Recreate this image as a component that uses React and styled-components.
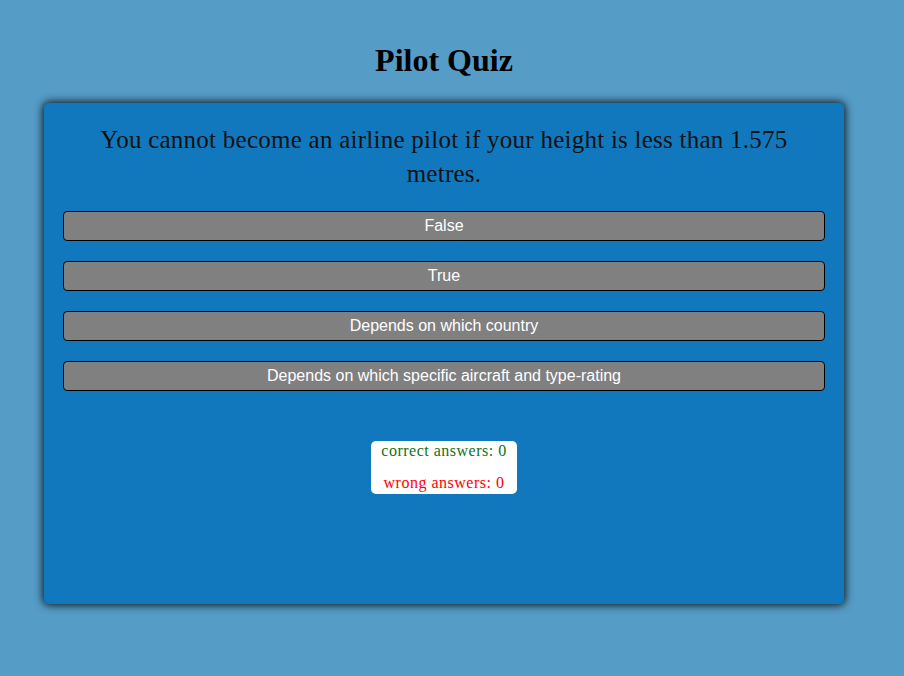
import React from "react";
import styled, { createGlobalStyle } from "styled-components";

const GlobalStyle = createGlobalStyle`
  html, body {
    margin: 0;
    padding: 0;
    background-color: #559cc7;
  }
  body {
    font-family: "Liberation Serif", "DejaVu Serif", serif;
    min-height: 676px;
  }
`;

const Page = styled.div`
  width: 888px;
  display: flex;
  flex-direction: column;
  align-items: center;
  padding-top: 40px;
`;

const Title = styled.h1`
  margin: 0 0 23px;
  font-size: 32px;
  line-height: 40px;
  font-weight: bold;
  color: #000;
`;

const Card = styled.div`
  width: 800px;
  height: 501px;
  box-sizing: border-box;
  background-color: #1278bd;
  border-radius: 5px;
  box-shadow: 0 0 8px 1px rgba(0, 0, 0, 0.9);
  padding: 20px 19px;
  display: flex;
  flex-direction: column;
  align-items: center;
`;

const Question = styled.p`
  margin: 0 0 20px;
  padding: 0 30px;
  font-size: 25px;
  line-height: 34px;
  letter-spacing: 0.25px;
  text-align: center;
  color: #111;
`;

const Answers = styled.div`
  width: 100%;
  display: flex;
  flex-direction: column;
  gap: 20px;
`;

const AnswerButton = styled.button`
  width: 100%;
  height: 30px;
  box-sizing: border-box;
  background-color: #808080;
  border: 1px solid #000;
  border-radius: 4px;
  color: #fff;
  font-family: "Liberation Sans", Arial, sans-serif;
  font-size: 16px;
  cursor: pointer;
`;

const Score = styled.div`
  margin-top: 50px;
  background-color: #fff;
  border-radius: 5px;
  padding: 0 10px 1px;
  display: flex;
  flex-direction: column;
  align-items: center;
  gap: 12px;
`;

const ScoreLine = styled.span`
  font-size: 16px;
  line-height: 20px;
  letter-spacing: 0.5px;
  color: ${({ $wrong }) => ($wrong ? "#ff0000" : "#14701a")};
`;

const answers = [
  "False",
  "True",
  "Depends on which country",
  "Depends on which specific aircraft and type-rating",
];

export default function App() {
  return (
    <>
      <GlobalStyle />
      <Page>
        <Title>Pilot Quiz</Title>
        <Card>
          <Question>
            You cannot become an airline pilot if your height is less than 1.575 metres.
          </Question>
          <Answers>
            {answers.map((a) => (
              <AnswerButton key={a}>{a}</AnswerButton>
            ))}
          </Answers>
          <Score>
            <ScoreLine>correct answers: 0</ScoreLine>
            <ScoreLine $wrong>wrong answers: 0</ScoreLine>
          </Score>
        </Card>
      </Page>
    </>
  );
}
